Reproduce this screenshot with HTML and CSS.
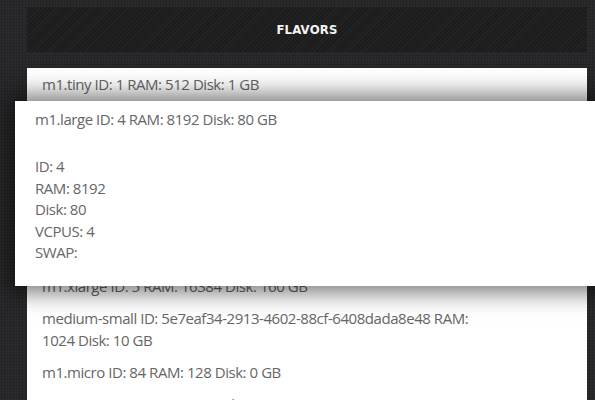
FILE: index.html
```html
<!DOCTYPE html>
<html>
<head>
<meta charset="utf-8">
<link rel="stylesheet" href="styles.css">
</head>
<body>
<div class="page">
  <header class="bar"><h1 class="bar-title">FLAVORS</h1></header>
  <ul class="list">
    <li class="item">m1.tiny ID: 1 RAM: 512 Disk: 1 GB</li>
    <li class="slot" aria-hidden="true"></li>
    <li class="item">m1.xlarge ID: 5 RAM: 16384 Disk: 160 GB</li>
    <li class="item">medium-small ID: 5e7eaf34-2913-4602-88cf-6408dada8e48 RAM: 1024 Disk: 10 GB</li>
    <li class="item">m1.micro ID: 84 RAM: 128 Disk: 0 GB</li>
    <li class="item">nano-256 ID: -1 RAM: 256 Disk: 0 GB</li>
  </ul>
  <div class="card">
    <div class="card-title">m1.large ID: 4 RAM: 8192 Disk: 80 GB</div>
    <div class="card-details">
      <div>ID: 4</div>
      <div>RAM: 8192</div>
      <div>Disk: 80</div>
      <div>VCPUS: 4</div>
      <div>SWAP:</div>
    </div>
  </div>
</div>
</body>
</html>
```
FILE: styles.css
```css
html, body {
  margin: 0;
  padding: 0;
  height: 100%;
  overflow: hidden;
}
body {
  background-color: #2b2b2d;
  background-image: radial-gradient(circle, #212123 0.8px, transparent 1.2px);
  background-size: 3px 3px;
  font-family: "Open Sans", "Liberation Sans", sans-serif;
}
.page {
  position: relative;
  padding: 7px 8px 0 27px;
}
.bar {
  height: 45px;
  display: flex;
  align-items: center;
  justify-content: center;
  background-color: #1f1f20;
  background-image: repeating-linear-gradient(135deg, #242425 0, #242425 1px, #1c1c1d 1px, #1c1c1d 3px);
}
.bar-title {
  margin: 0;
  font-family: "DejaVu Sans Condensed", "DejaVu Sans", sans-serif;
  font-weight: bold;
  font-size: 13px;
  letter-spacing: 0.2px;
  color: #f2f2f2;
}
.list {
  list-style: none;
  margin: 16px 0 0;
  padding: 0;
  background: #fff;
}
.item {
  padding: 5px 110px 5px 15px;
  font-size: 15px;
  line-height: 22px;
  letter-spacing: -0.45px;
  color: #666;
}
.slot {
  height: 170px;
}
.card {
  position: absolute;
  left: 15px;
  right: -10px;
  top: 101px;
  height: 185px;
  box-sizing: border-box;
  padding: 7px 20px;
  background: #fff;
  box-shadow: 0 0 22px 6px rgba(0, 0, 0, 0.55);
  font-size: 15px;
  line-height: 22px;
  letter-spacing: -0.45px;
  color: #666;
}
.card-details {
  margin-top: 26px;
  line-height: 21.5px;
}
```
